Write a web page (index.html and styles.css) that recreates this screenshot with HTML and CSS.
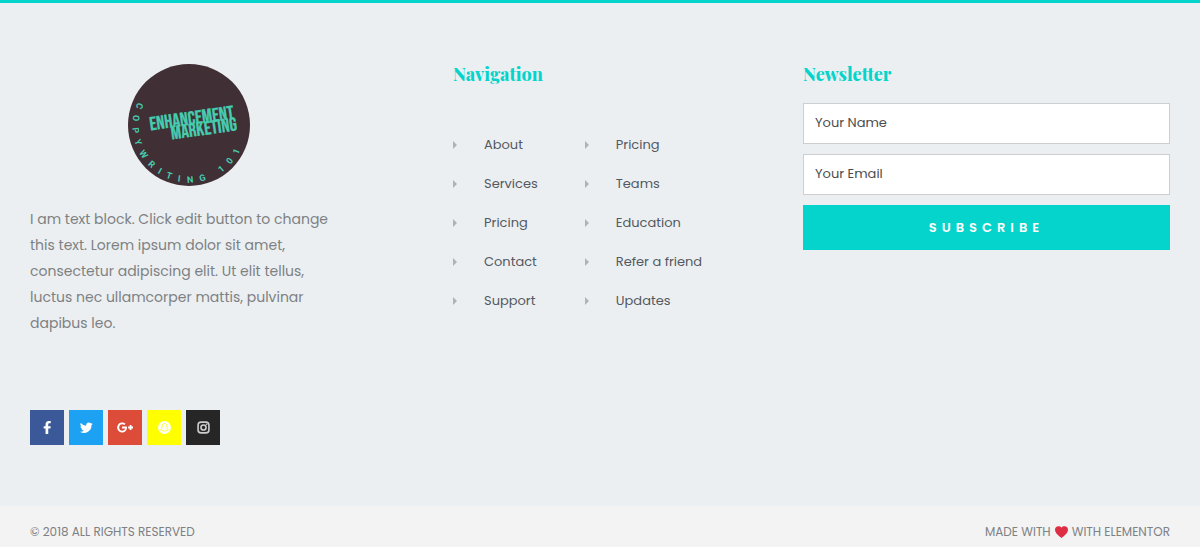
FILE: index.html
```html
<!DOCTYPE html>
<html lang="en">
<head>
<meta charset="utf-8">
<meta name="viewport" content="width=device-width, initial-scale=1">
<title>Enhancement Marketing</title>
<link rel="stylesheet" href="styles.css">
</head>
<body>
<footer class="site-footer">
  <div class="footer-main">
    <section class="about">
      <svg class="logo" viewBox="0 0 122 122" role="img" aria-label="Enhancement Marketing">
        <defs><path id="ring" d="M9.700 38.500A56.500 56.500 0 1 0 117 70"/></defs>
        <circle cx="61" cy="61" r="61" fill="#402f35"/>
        <g class="logo-name" transform="rotate(-8 61 61)">
          <text x="22" y="61">ENHANCEMENT</text>
          <text x="42" y="73">MARKETING</text>
        </g>
        <text class="logo-ring"><textPath href="#ring">COPYWRITING 101</textPath></text>
      </svg>
      <p class="about-text">I am text block. Click edit button to change this text. Lorem ipsum dolor sit amet, consectetur adipiscing elit. Ut elit tellus, luctus nec ullamcorper mattis, pulvinar dapibus leo.</p>
      <div class="social">
        <a class="social-link facebook" href="#" aria-label="Facebook"><svg viewBox="0 0 14 14"><path d="M4.900 14V8H2.900V5.600h2V3.700C4.900 1.300 6.100 0 8.400 0h2.100v2.400H9.100c-.9 0-1.300.4-1.300 1.200v2h2.700L10.100 8H7.800v6z"/></svg></a>
        <a class="social-link twitter" href="#" aria-label="Twitter"><svg viewBox="0 0 24 24"><path d="M23.600 4.900a9.500 9.500 0 0 1-2.800.8 4.900 4.900 0 0 0 2.100-2.700 9.700 9.700 0 0 1-3.100 1.200 4.900 4.900 0 0 0-8.300 4.400A13.800 13.800 0 0 1 1.500 3.600a4.900 4.900 0 0 0 1.500 6.500 4.800 4.800 0 0 1-2.200-.6 4.900 4.900 0 0 0 3.900 4.800 4.900 4.900 0 0 1-2.200.1 4.900 4.900 0 0 0 4.500 3.400A9.800 9.800 0 0 1 0 19.800a13.800 13.800 0 0 0 21.200-12.400 9.900 9.900 0 0 0 2.400-2.500z"/></svg></a>
        <a class="social-link google" href="#" aria-label="Google Plus"><svg class="wide" viewBox="0 0 36 24"><path d="M11.400 10v4.100h6.700c-.3 1.700-2 5.100-6.700 5.100A7.300 7.300 0 0 1 11.400 4.700c2.300 0 3.800 1 4.700 1.800L19.300 3.400A11.400 11.400 0 1 0 11.400 23.400c6.600 0 11-4.600 11-11.200 0-.8-.1-1.400-.2-2.200zM36 10h-3.500V6.500h-4V10H25v4h3.500v3.500h4V14H36z"/></svg></a>
        <a class="social-link snapchat" href="#" aria-label="Snapchat"><svg viewBox="0 0 24 24"><circle cx="12" cy="12" r="12"/><path fill="none" stroke="#ff0" stroke-width="1.500" d="M12 4.500c-2.600 0-4.300 1.700-4.300 4.200v2.500l-1.400.2 1.300 1.200c-.4 1.500-1.400 2.600-2.800 3.200l2.300.8.4 1c2.200-.3 2.700 1.200 4.500 1.200s2.300-1.500 4.500-1.200l.4-1 2.300-.8c-1.400-.6-2.400-1.700-2.800-3.200l1.300-1.200-1.400-.2V8.700c0-2.500-1.700-4.200-4.300-4.200z"/></svg></a>
        <a class="social-link instagram" href="#" aria-label="Instagram"><svg viewBox="0 0 24 24"><g fill="none" stroke="currentColor" stroke-width="3"><rect x="2" y="2" width="20" height="20" rx="5.500"/><circle cx="12" cy="12" r="4.700"/></g><circle cx="17.800" cy="6.200" r="1.500"/></svg></a>
      </div>
    </section>
    <nav class="navigation" aria-labelledby="nav-title">
      <h2 class="title" id="nav-title">Navigation</h2>
      <div class="link-columns">
        <ul class="links">
          <li><a href="#">About</a></li>
          <li><a href="#">Services</a></li>
          <li><a href="#">Pricing</a></li>
          <li><a href="#">Contact</a></li>
          <li><a href="#">Support</a></li>
        </ul>
        <ul class="links">
          <li><a href="#">Pricing</a></li>
          <li><a href="#">Teams</a></li>
          <li><a href="#">Education</a></li>
          <li><a href="#">Refer a friend</a></li>
          <li><a href="#">Updates</a></li>
        </ul>
      </div>
    </nav>
    <section class="newsletter">
      <h2 class="title">Newsletter</h2>
      <form class="signup">
        <input class="field" type="text" placeholder="Your Name" aria-label="Your Name">
        <input class="field" type="email" placeholder="Your Email" aria-label="Your Email">
        <button class="subscribe" type="submit">SUBSCRIBE</button>
      </form>
    </section>
  </div>
  <div class="footer-bar">
    <p>© 2018 ALL RIGHTS RESERVED</p>
    <p class="credit">MADE WITH <svg class="heart" viewBox="0 0 24 22" role="img" aria-label="love"><path d="M12 22C8 19 0 13.500 0 6.800 0 3 2.700.5 6.200.5c2.600 0 4.800 1 5.800 2.500C13 1.500 15.200.5 17.800.5 21.300.5 24 3 24 6.800 24 13.500 16 19 12 22z"/></svg> WITH ELEMENTOR</p>
  </div>
</footer>
</body>
</html>
```
FILE: styles.css
```css
* { box-sizing: border-box; }

body {
  margin: 0;
  background: #ebeff2;
  color: #7e8183;
  font-family: Poppins, Inter, sans-serif;
  font-size: 14px;
}

p, ul, h2 { margin: 0; padding: 0; }

.site-footer { border-top: 3px solid #04d4cb; }

.footer-main {
  display: grid;
  grid-template-columns: 423fr 350fr 367fr;
  padding: 61px 30px;
}

.about { padding-right: 105px; }

.logo {
  display: block;
  width: 122px;
  height: 122px;
  margin: 0 auto 20px;
}

.logo text { fill: #46cdb0; }

.logo-name text {
  font-family: "Bebas Neue", "Roboto Condensed", "Liberation Sans Narrow", sans-serif;
  font-size: 19px;
  stroke: #46cdb0;
  stroke-width: 0.3px;
}

.logo-ring {
  font-family: Roboto, sans-serif;
  font-size: 9px;
  font-weight: 700;
  letter-spacing: 7px;
}

.about-text { line-height: 26px; }

.social {
  display: flex;
  gap: 5px;
  margin-top: 74px;
}

.social-link {
  display: grid;
  place-items: center;
  width: 34px;
  height: 35px;
  color: #fff;
}

.social-link svg { width: 13px; height: 13px; fill: currentColor; }
.social-link .wide { width: 16px; }

.facebook { background: #3b5998; }
.twitter { background: #1da1f2; }
.google { background: #dd4b39; }
.snapchat { background: #ff0; }
.instagram { background: #262626; color: #ccc; }

.title {
  color: #04d4cb;
  font-family: "Playfair Display", "Liberation Serif", serif;
  font-size: 18px;
  font-weight: 800;
  line-height: 20px;
}

.link-columns {
  display: flex;
  gap: 47px;
  margin-top: 49px;
}

.links {
  display: grid;
  gap: 15px;
  list-style: none;
  line-height: 24px;
  font-size: 13px;
}

.links a {
  display: flex;
  align-items: center;
  gap: 27px;
  color: #54595f;
  text-decoration: none;
}

.links a::before {
  content: "";
  border: solid transparent;
  border-width: 4px 0 4px 4px;
  border-left-color: #afb3b6;
}

.signup {
  display: grid;
  gap: 10px;
  margin-top: 19px;
}

.field {
  width: 100%;
  height: 41px;
  padding: 0 11px 2px;
  border: 1px solid #ccced0;
  border-radius: 0;
  background: #fff;
  color: #444;
  font: inherit;
  font-size: 13px;
}

.field::placeholder { color: #4c4c4c; opacity: 1; }

.subscribe {
  height: 45px;
  border: 0;
  background: #04d4cb;
  color: #fff;
  font: inherit;
  font-size: 13px;
  font-weight: 600;
  letter-spacing: 5px;
}

.footer-bar {
  display: flex;
  justify-content: space-between;
  padding: 16px 30px 5px;
  background: #f3f3f3;
  font-size: 12px;
  line-height: 20px;
}

.credit {
  display: flex;
  align-items: center;
  gap: 4px;
}

.heart { width: 13px; height: 12px; fill: #dd2e44; }
```
